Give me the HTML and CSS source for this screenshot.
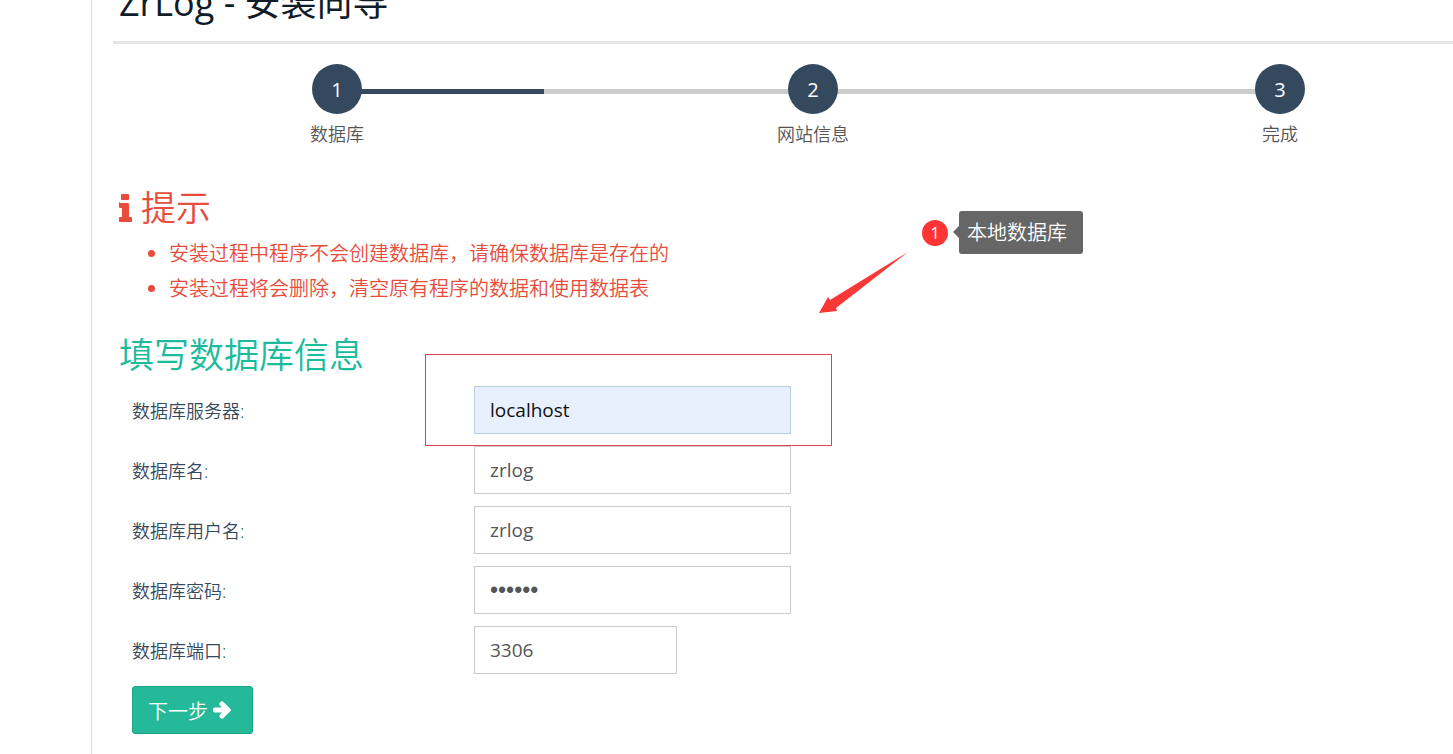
FILE: index.html
```html
<!DOCTYPE html>
<html lang="zh-CN">
<head>
  <meta charset="UTF-8">
  <title>ZrLog - 安装向导</title>
  <link rel="stylesheet" href="styles.css">
</head>
<body>
  <div class="page">
    <h1>ZrLog - 安装向导</h1>

    <ol class="steps">
      <li><span class="step-number">1</span>数据库</li>
      <li><span class="step-number">2</span>网站信息</li>
      <li><span class="step-number">3</span>完成</li>
    </ol>

    <div class="content">
      <h2 class="danger">
        <svg class="icon-info" viewBox="0 0 13 28" aria-hidden="true">
          <path d="M3 0h6q1 0 1 1v4q0 1-1 1H3q-1 0-1-1V1q0-1 1-1zM1 9h8q1 0 1 1v13h2q1 0 1 1v3q0 1-1 1H1q-1 0-1-1v-3q0-1 1-1h2v-9H1q-1 0-1-1v-4q0-1 1-1z"/>
        </svg>
        提示
      </h2>
      <ul class="tips">
        <li>安装过程中程序不会创建数据库，请确保数据库是存在的</li>
        <li>安装过程将会删除，清空原有程序的数据和使用数据表</li>
      </ul>

      <h2 class="success">填写数据库信息</h2>
      <form>
        <div class="row">
          <label for="dbhost">数据库服务器:</label>
          <div class="field">
            <input type="text" id="dbhost" name="dbhost" class="autofill" value="localhost">
            <div class="highlight"></div>
            <svg class="arrow" viewBox="0 0 90 62" aria-hidden="true">
              <path d="M89 0L17 56L18 59L0 61L9 45L11 48Z"/>
            </svg>
            <div class="note">
              <span class="note-number">1</span>
              <span class="note-text">本地数据库</span>
            </div>
          </div>
        </div>
        <div class="row">
          <label for="dbname">数据库名:</label>
          <div class="field"><input type="text" id="dbname" name="dbname" value="zrlog"></div>
        </div>
        <div class="row">
          <label for="dbuser">数据库用户名:</label>
          <div class="field"><input type="text" id="dbuser" name="dbuser" value="zrlog"></div>
        </div>
        <div class="row">
          <label for="dbpwd">数据库密码:</label>
          <div class="field"><input type="password" id="dbpwd" name="dbpwd" value="123456"></div>
        </div>
        <div class="row">
          <label for="port">数据库端口:</label>
          <div class="field"><input type="text" id="port" name="port" class="short" value="3306"></div>
        </div>
        <button type="button">下一步
          <svg class="icon-next" viewBox="0 0 18 18" aria-hidden="true">
            <path d="M2 9H15M9 3L15 9L9 15"/>
          </svg>
        </button>
      </form>
    </div>
  </div>
</body>
</html>
```

FILE: styles.css
```css
* {
  box-sizing: border-box;
}

body {
  margin: 0;
  background-color: #fff;
  color: #34495e;
  font-family: "Open Sans", "Noto Sans CJK SC", sans-serif;
  font-size: 20px;
  font-weight: 350;
  overflow: hidden;
}

.page {
  display: flow-root;
  min-height: 100vh;
  margin-left: 91px;
  padding-left: 21px;
  border-left: 1px solid #ddd;
}

h1 {
  margin: -24px 0 0;
  padding: 0 6px 12px;
  border-bottom: 3px solid #e5e5e5;
  color: #101c28;
  font-size: 36px;
  font-weight: 400;
  line-height: 53px;
}

/* wizard steps */
.steps {
  position: relative;
  display: flex;
  justify-content: space-between;
  margin: 20px 155px 0 197px;
  padding: 0;
  list-style: none;
  color: #555;
  font-size: 18px;
  line-height: 26px;
}

.steps::before,
.steps::after {
  content: "";
  position: absolute;
  top: 25px;
  left: 27px;
  right: 18px;
  height: 5px;
  background-color: #ccc;
}

.steps::after {
  right: auto;
  width: 21%;
  background-color: #34495e;
}

.steps li {
  display: flex;
  flex-direction: column;
  align-items: center;
}

.step-number {
  z-index: 1;
  width: 50px;
  height: 50px;
  margin: 0 -10px 7px;
  border-radius: 50%;
  background-color: #34495e;
  color: #fff;
  font-size: 20px;
  font-weight: 400;
  line-height: 52px;
  text-align: center;
}

.content {
  padding: 0 6px;
}

h2 {
  margin: 0;
  font-size: 35px;
  font-weight: 350;
  line-height: 38px;
}

.danger {
  display: flex;
  align-items: center;
  gap: 9px;
  margin-top: 42px;
}

.danger,
.tips {
  color: #e74c3c;
}

.success {
  color: #1abc9c;
}

.icon-info {
  width: 13px;
  height: 28px;
  fill: #e74c3c;
}

.tips {
  margin: 9px 0 30px;
  padding-left: 50px;
  line-height: 35px;
}

/* database form */
form {
  padding: 12px 0 20px 13px;
}

.row {
  display: flex;
  align-items: center;
  margin-bottom: 12px;
}

label {
  width: 342px;
  font-size: 18px;
}

.field {
  position: relative;
  width: 317px;
}

input {
  display: block;
  width: 100%;
  height: 48px;
  padding: 0 15px;
  border: 1px solid #ccc;
  background-color: #fff;
  color: #555;
  font: inherit;
  font-size: 19px;
  font-weight: 400;
}

input[type="password"] {
  font-family: "Liberation Sans", sans-serif;
  font-size: 23px;
}

.autofill {
  border-color: #b8cfe0;
  background-color: #e8f0fe;
  color: #111;
}

.short {
  width: 203px;
}

button {
  display: flex;
  align-items: center;
  gap: 5px;
  height: 48px;
  padding: 0 21px 0 15px;
  border: 1px solid #1fa387;
  border-radius: 3px;
  background-color: #24b999;
  color: #fff;
  font: inherit;
}

.icon-next {
  width: 18px;
  height: 18px;
  fill: none;
  stroke: #fff;
  stroke-width: 5;
  stroke-linecap: round;
}

/* notes drawn over the form */
.highlight {
  position: absolute;
  top: -32px;
  left: -49px;
  z-index: 1;
  width: 407px;
  height: 92px;
  border: 1px solid #e04050;
  pointer-events: none;
}

.arrow {
  position: absolute;
  top: -134px;
  left: 345px;
  width: 90px;
  height: 62px;
  fill: #fb3838;
}

.note {
  position: absolute;
  top: -175px;
  left: 448px;
  display: flex;
  align-items: center;
  gap: 11px;
  white-space: nowrap;
}

.note-number {
  width: 26px;
  height: 26px;
  border-radius: 50%;
  background-color: #ff3434;
  color: #fff;
  font-size: 16px;
  font-weight: 400;
  line-height: 26px;
  text-align: center;
}

.note-text {
  position: relative;
  padding: 0 16px 0 8px;
  border-radius: 3px;
  background-color: #666;
  color: #fff;
  line-height: 43px;
}

.note-text::before {
  content: "";
  position: absolute;
  top: 15px;
  left: -6px;
  border: 6px solid transparent;
  border-left: 0;
  border-right-color: #666;
}
```
